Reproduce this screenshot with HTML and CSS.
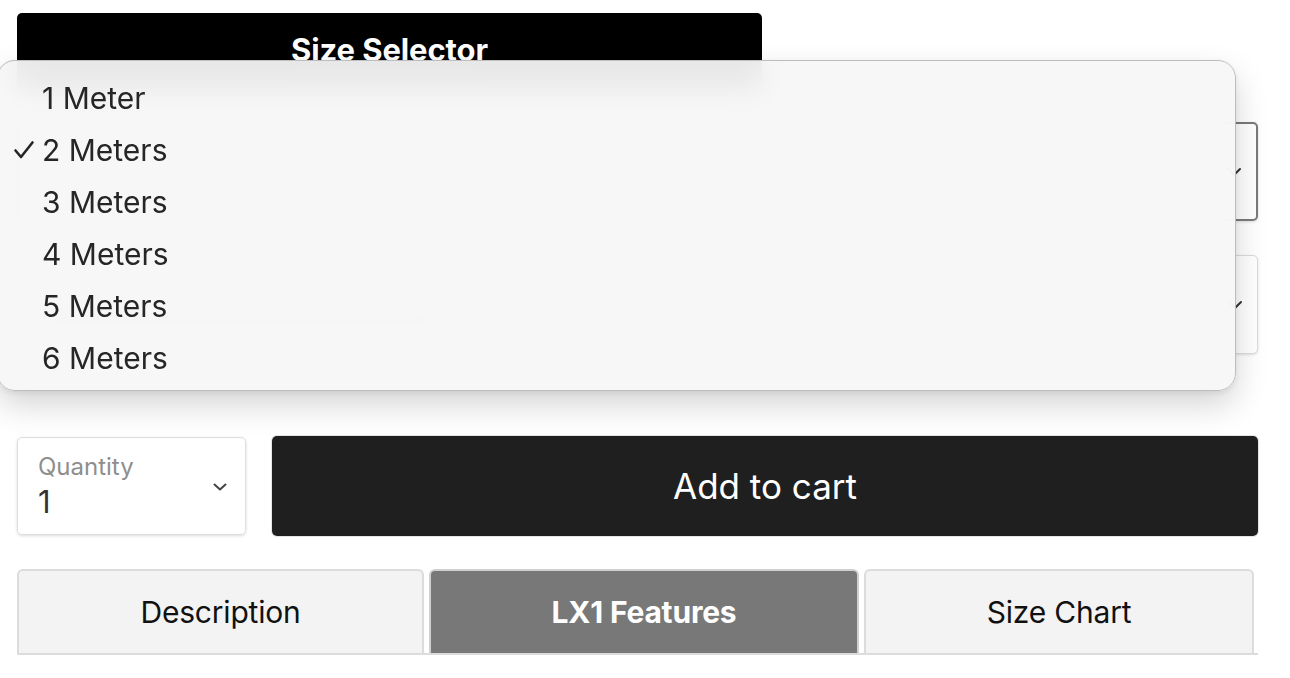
FILE: index.html
```html
<!DOCTYPE html>
<html>
<head>
<meta charset="utf-8">
<link rel="stylesheet" href="styles.css">
</head>
<body>
<div class="page">
  <div class="header-bar">Size Selector</div>

  <div class="select focused">
    <div class="select-text">
      <span class="ghost ghost-label"></span>
      <span class="ghost ghost-value"></span>
    </div>
    <svg class="chev" width="16" height="10" viewBox="0 0 16 10"><path d="M2 2 L8 8 L14 2" fill="none" stroke="#333" stroke-width="2" stroke-linecap="round" stroke-linejoin="round"/></svg>
  </div>

  <div class="select">
    <div class="select-text">
      <span class="ghost ghost-label"></span>
      <span class="ghost ghost-value wide"></span>
    </div>
    <svg class="chev" width="16" height="10" viewBox="0 0 16 10"><path d="M2 2 L8 8 L14 2" fill="none" stroke="#333" stroke-width="2" stroke-linecap="round" stroke-linejoin="round"/></svg>
  </div>

  <div class="buy-row">
    <div class="qty">
      <div class="qty-text">
        <span class="qty-label">Quantity</span>
        <span class="qty-value">1</span>
      </div>
      <svg class="chev" width="16" height="10" viewBox="0 0 16 10"><path d="M2.5 2.5 L8 7.5 L13.5 2.5" fill="none" stroke="#444" stroke-width="2" stroke-linecap="round" stroke-linejoin="round"/></svg>
    </div>
    <button class="add-cart">Add to cart</button>
  </div>

  <div class="tabs">
    <div class="tab">Description</div>
    <div class="tab active">LX1 Features</div>
    <div class="tab last">Size Chart</div>
  </div>

  <div class="menu">
    <div class="menu-item"><span class="check"></span>1 Meter</div>
    <div class="menu-item"><span class="check"><svg width="22" height="20" viewBox="0 0 22 20"><path d="M2.5 10.5 L8 17 L19.5 2.5" fill="none" stroke="#262626" stroke-width="2.6" stroke-linecap="round" stroke-linejoin="round"/></svg></span>2 Meters</div>
    <div class="menu-item"><span class="check"></span>3 Meters</div>
    <div class="menu-item"><span class="check"></span>4 Meters</div>
    <div class="menu-item"><span class="check"></span>5 Meters</div>
    <div class="menu-item"><span class="check"></span>6 Meters</div>
  </div>
</div>
</body>
</html>
```

FILE: styles.css
```css
html, body {
  margin: 0;
  padding: 0;
  background: #ffffff;
  font-family: "Inter", "Roboto", "Liberation Sans", sans-serif;
  color: #1f1f1f;
}

.page {
  position: relative;
  width: 1241px;
  padding: 13px 0 0 17px;
  height: 665px;
}

.header-bar {
  height: 76px;
  width: 745px;
  box-sizing: border-box;
  padding-top: 21px;
  background: #000;
  color: #fff;
  border-radius: 5px 5px 0 0;
  font-size: 31px;
  font-weight: 700;
  line-height: 1;
  text-align: center;
  letter-spacing: -0.1px;
}

.select {
  margin-top: 33px;
  height: 99px;
  box-sizing: border-box;
  border: 1px solid #dcdcdc;
  border-radius: 5px;
  display: flex;
  align-items: center;
  justify-content: space-between;
  padding: 0 14px 0 20px;
  box-shadow: 0 1px 3px rgba(0,0,0,0.12);
  background: #fff;
}

.select.focused {
  border: 2px solid #7a7a7a;
}

.select + .select {
  margin-top: 34px;
}

.select-text {
  display: flex;
  flex-direction: column;
  gap: 14px;
}

.ghost {
  display: block;
  height: 14px;
  border-radius: 7px;
  background: #e2e2e2;
}

.ghost-label {
  width: 90px;
  background: #ececec;
}

.ghost-value {
  width: 240px;
  background: #e0e0e0;
}

.ghost-value.wide {
  width: 410px;
  background: #d4d4d4;
}

.buy-row {
  margin-top: 83px;
  display: flex;
  gap: 26px;
  align-items: stretch;
}

.qty {
  width: 229px;
  height: 98px;
  box-sizing: border-box;
  border: 1px solid #dedede;
  border-radius: 5px;
  box-shadow: 0 1px 3px rgba(0,0,0,0.15);
  display: flex;
  align-items: center;
  justify-content: space-between;
  padding: 0 17px 0 20px;
}

.qty .chev {
  margin-top: 2px;
}

.qty-text {
  display: flex;
  flex-direction: column;
  padding-top: 2px;
}

.qty-label {
  font-size: 24px;
  color: #8e8e8e;
  line-height: 26px;
}

.qty-value {
  font-size: 31px;
  color: #333;
  line-height: 36px;
  margin-top: 4px;
}

.add-cart {
  flex: 1;
  height: 100px;
  margin-top: -1px;
  background: #1f1f1f;
  color: #fff;
  border: none;
  border-radius: 5px;
  box-shadow: 0 0 0 1px #e4e4e4;
  font-family: "Inter", "Roboto", "Liberation Sans", sans-serif;
  font-size: 35px;
  font-weight: 400;
  padding: 0;
}

.tabs {
  margin-top: 33px;
  display: flex;
  gap: 5px;
  border-bottom: 2px solid #dcdcdc;
  width: 1241px;
  height: 84px;
}

.tab {
  width: 407px;
  box-sizing: border-box;
  background: #f3f3f3;
  border: 2px solid #dcdcdc;
  border-bottom: none;
  border-radius: 6px 6px 0 0;
  display: flex;
  align-items: center;
  justify-content: center;
  font-size: 30px;
  color: #111;
  letter-spacing: -0.2px;
}

.tab.active {
  width: 430px;
  background: #787878;
  border-color: #d0d0d0;
  color: #fff;
  font-weight: 700;
}

.tab.last {
  width: 390px;
}

.menu {
  position: absolute;
  left: -3px;
  top: 60px;
  width: 1239px;
  height: 331px;
  box-sizing: border-box;
  border: 1px solid #bdbdbd;
  border-radius: 18px;
  background: rgba(247, 247, 247, 0.94);
  backdrop-filter: blur(14px);
  -webkit-backdrop-filter: blur(14px);
  box-shadow: 0 14px 32px rgba(0,0,0,0.17), 0 2px 6px rgba(0,0,0,0.08);
  padding-top: 11px;
}

.menu-item {
  height: 52px;
  display: flex;
  align-items: center;
  font-size: 30px;
  color: #262626;
  padding-left: 15px;
}

.check {
  display: inline-flex;
  align-items: center;
  width: 29px;
  height: 20px;
}
```
